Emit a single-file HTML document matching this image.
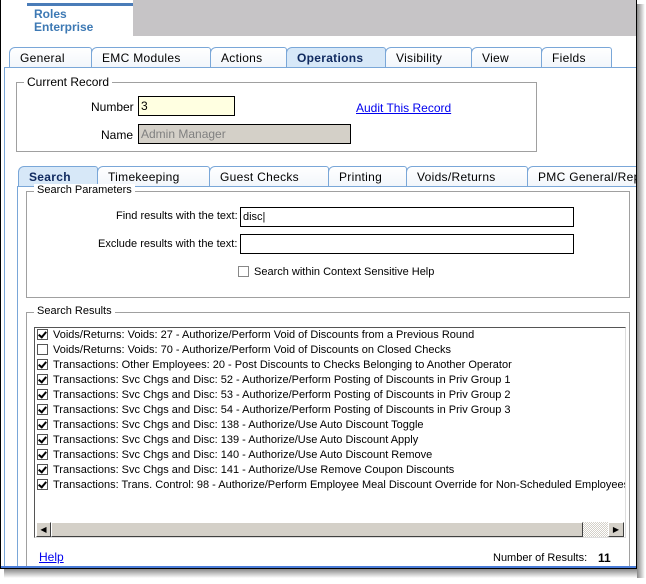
<!DOCTYPE html>
<html><head><meta charset="utf-8"><style>
body{margin:0;width:646px;height:584px;background:#fff;position:relative;overflow:hidden;font-family:"Liberation Sans",Tahoma,sans-serif;font-size:11px;color:#000}
.a{position:absolute}
#win{position:absolute;left:0;top:0;width:637px;height:569px;overflow:hidden;border-right:1px solid #000;border-bottom:1px solid #000;border-left:1px solid #000;box-sizing:border-box;background:#fff}
.tab{position:absolute;height:20px;border:1px solid #7aa7d8;border-bottom:none;background:linear-gradient(#fff,#f2f6fb);font-size:12px;line-height:20px;padding-left:10px;box-sizing:border-box;border-radius:6px 3px 0 0;color:#000;letter-spacing:.3px;white-space:nowrap}
.tab.act{background:#d7e8f8;font-weight:bold;color:#102a60}
.grp{position:absolute;border:1px solid #a0a0a0}
.lg{position:absolute;background:#fff;padding:0 3px;top:-8px;left:7px}
.inp{position:absolute;border:1px solid #000;background:#fff;box-sizing:border-box;padding-left:2px;line-height:18px}
.row{position:absolute;height:15px;line-height:15px;white-space:nowrap}
.cb{display:inline-block;width:9px;height:9px;border:1px solid #555;vertical-align:-2px;margin-right:5px;background:#fff;position:relative}
.cb.c::after{content:"";position:absolute;left:2px;top:0px;width:3px;height:6px;border:solid #000;border-width:0 2px 2px 0;transform:rotate(40deg)}
a{color:#00e;text-decoration:underline}
</style></head><body>
<div class="a" style="left:4px;top:569px;width:636px;height:9px;background:linear-gradient(#888,#fff)"></div>
<div class="a" style="left:637px;top:4px;width:8px;height:574px;background:linear-gradient(90deg,#888,#fff)"></div>
<div id="win">
<div class="a" style="left:132px;top:0;width:510px;height:36px;background:#c6c4c6"></div>
<div class="a" style="left:26px;top:3px;width:106px;height:3px;background:#4a7cb8"></div>
<div class="a" style="left:33px;top:8px;font-weight:bold;font-size:12px;color:#3d79b4;line-height:13px">Roles<br>Enterprise</div>
<div class="a" style="left:3px;top:67px;width:640px;height:510px;border-top:1px solid #7aa7d8;border-left:1px solid #7aa7d8;box-sizing:border-box"></div>
<div class="tab" style="left:8px;top:47px;width:83px">General</div>
<div class="tab" style="left:90px;top:47px;width:120px">EMC Modules</div>
<div class="tab" style="left:209px;top:47px;width:77px">Actions</div>
<div class="tab act" style="left:285px;top:47px;width:100px">Operations</div>
<div class="tab" style="left:384px;top:47px;width:87px">Visibility</div>
<div class="tab" style="left:470px;top:47px;width:71px">View</div>
<div class="tab" style="left:540px;top:47px;width:71px">Fields</div>
<div class="grp" style="left:15px;top:82px;width:519px;height:68px"><div class="lg" style="font-size:12px">Current Record</div></div>
<div class="a" style="left:90px;top:100px;font-size:12px">Number</div>
<div class="inp" style="left:137px;top:96px;width:97px;height:20px;background:#ffffe1;font-size:12px">3</div>
<div class="a" style="left:355px;top:101px;font-size:12px"><a>Audit This Record</a></div>
<div class="a" style="left:100px;top:128px;font-size:12px">Name</div>
<div class="inp" style="left:137px;top:124px;width:213px;height:20px;background:#d4d0c8;color:#808080;font-size:12px">Admin Manager</div>
<div class="a" style="left:16px;top:186px;width:640px;height:381px;border-top:1px solid #7aa7d8;border-left:1px solid #7aa7d8;border-bottom:1px solid #4a7cd8;box-sizing:border-box"></div>
<div class="tab act" style="left:17px;top:166px;width:80px">Search</div>
<div class="tab" style="left:96px;top:166px;width:113px">Timekeeping</div>
<div class="tab" style="left:208px;top:166px;width:120px">Guest Checks</div>
<div class="tab" style="left:327px;top:166px;width:79px">Printing</div>
<div class="tab" style="left:405px;top:166px;width:122px">Voids/Returns</div>
<div class="tab" style="left:526px;top:166px;width:130px;border-radius:6px 0 0 0">PMC General/Rep</div>
<div class="grp" style="left:25px;top:191px;width:602px;height:105px"><div class="lg">Search Parameters</div></div>
<div class="a" style="left:115px;top:210px">Find results with the text:</div>
<div class="inp" style="left:239px;top:207px;width:334px;height:20px">disc|</div>
<div class="a" style="left:97px;top:238px">Exclude results with the text:</div>
<div class="inp" style="left:239px;top:234px;width:334px;height:20px"></div>
<div class="a" style="left:237px;top:266px"><span class="cb" style="border-color:#888"></span>Search within Context Sensitive Help</div>
<div class="grp" style="left:25px;top:312px;width:602px;height:270px"><div class="lg">Search Results</div></div>
<div class="a" style="left:33px;top:327px;width:592px;height:211px;border:1px solid #555;border-right-color:#ddd;border-bottom-color:#ddd;box-sizing:border-box;overflow:hidden;background:#fff">
<div style="position:absolute;left:0;top:0;width:590px;height:194px;overflow:hidden">
<div class="row" style="left:2px;top:0"><span class="cb c"></span>Voids/Returns: Voids: 27 - Authorize/Perform Void of Discounts from a Previous Round</div>
<div class="row" style="left:2px;top:15px"><span class="cb"></span>Voids/Returns: Voids: 70 - Authorize/Perform Void of Discounts on Closed Checks</div>
<div class="row" style="left:2px;top:30px"><span class="cb c"></span>Transactions: Other Employees: 20 - Post Discounts to Checks Belonging to Another Operator</div>
<div class="row" style="left:2px;top:45px"><span class="cb c"></span>Transactions: Svc Chgs and Disc: 52 - Authorize/Perform Posting of Discounts in Priv Group 1</div>
<div class="row" style="left:2px;top:60px"><span class="cb c"></span>Transactions: Svc Chgs and Disc: 53 - Authorize/Perform Posting of Discounts in Priv Group 2</div>
<div class="row" style="left:2px;top:75px"><span class="cb c"></span>Transactions: Svc Chgs and Disc: 54 - Authorize/Perform Posting of Discounts in Priv Group 3</div>
<div class="row" style="left:2px;top:90px"><span class="cb c"></span>Transactions: Svc Chgs and Disc: 138 - Authorize/Use Auto Discount Toggle</div>
<div class="row" style="left:2px;top:105px"><span class="cb c"></span>Transactions: Svc Chgs and Disc: 139 - Authorize/Use Auto Discount Apply</div>
<div class="row" style="left:2px;top:120px"><span class="cb c"></span>Transactions: Svc Chgs and Disc: 140 - Authorize/Use Auto Discount Remove</div>
<div class="row" style="left:2px;top:135px"><span class="cb c"></span>Transactions: Svc Chgs and Disc: 141 - Authorize/Use Remove Coupon Discounts</div>
<div class="row" style="left:2px;top:150px"><span class="cb c"></span>Transactions: Trans. Control: 98 - Authorize/Perform Employee Meal Discount Override for Non-Scheduled Employees</div>
</div>
<div style="position:absolute;left:1px;top:194px;width:588px;height:15px;background:repeating-conic-gradient(#d4d0c8 0 25%,#fff 0 50%) 0 0/2px 2px"></div>
<div style="position:absolute;left:1px;top:194px;width:15px;height:15px;background:#d4d0c8;border:1px solid;border-color:#fff #404040 #404040 #fff;box-sizing:border-box;font-size:8px;line-height:13px;text-align:center">◀</div>
<div style="position:absolute;left:16px;top:194px;width:532px;height:15px;background:#d4d0c8;border:1px solid;border-color:#fff #404040 #404040 #fff;box-sizing:border-box"></div>
<div style="position:absolute;left:573px;top:194px;width:16px;height:15px;background:#d4d0c8;border:1px solid;border-color:#fff #404040 #404040 #fff;box-sizing:border-box;font-size:8px;line-height:13px;text-align:center">▶</div>
</div>
<div class="a" style="left:38px;top:550px;font-size:12px"><a>Help</a></div>
<div class="a" style="left:492px;top:552px">Number of Results:</div>
<div class="a" style="left:597px;top:551px;font-weight:bold;font-size:12px">11</div>
<div class="a" style="left:0;top:566px;width:640px;height:2px;background:#4a7cd8"></div>
</div>
</body></html>
